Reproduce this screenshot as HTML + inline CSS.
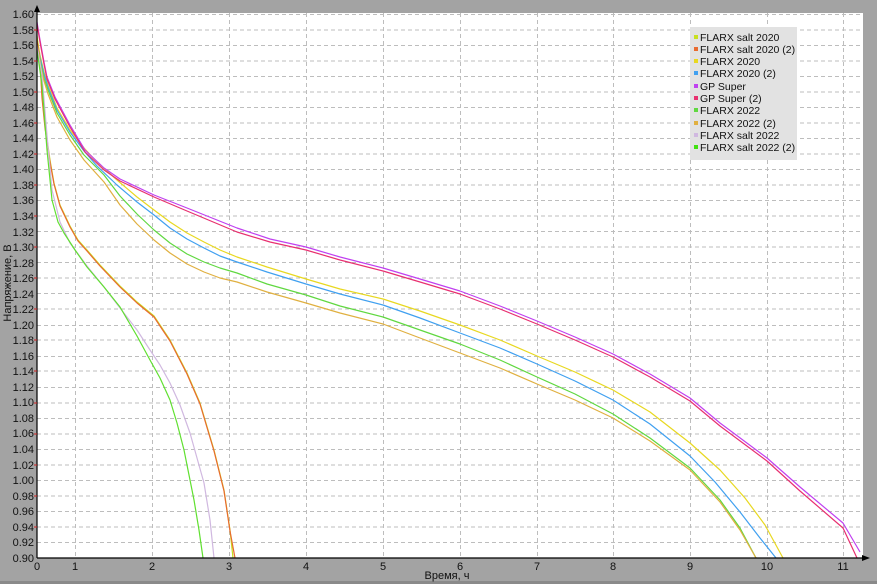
<!DOCTYPE html>
<html><head><meta charset="utf-8"><style>
html,body{margin:0;padding:0;background:#a3a3a3;}
svg{display:block;font-family:"Liberation Sans","DejaVu Sans",sans-serif;}
</style></head><body>
<svg width="877" height="584" viewBox="0 0 877 584" xmlns="http://www.w3.org/2000/svg">
<rect x="0" y="0" width="877" height="584" fill="#a3a3a3"/>
<rect x="0" y="581" width="877" height="3" fill="#8a8a8a"/>
<rect x="37" y="13" width="826" height="545" fill="#ffffff"/>
<g stroke="#bdbdbd" stroke-width="1" stroke-dasharray="4,3" fill="none">
<path d="M75.5 13V558M152.5 13V558M229.5 13V558M306.5 13V558M383.5 13V558M460.5 13V558M537.5 13V558M613.5 13V558M690.5 13V558M767.5 13V558M843.5 13V558"/>
<path d="M37 14.5H863M37 45.5H863M37 76.5H863M37 107.5H863M37 138.5H863M37 169.5H863M37 200.5H863M37 231.5H863M37 262.5H863M37 293.5H863M37 325.5H863M37 356.5H863M37 387.5H863M37 418.5H863M37 449.5H863M37 480.5H863M37 511.5H863M37 542.5H863"/>
<path d="M37 30H863M37 61H863M37 92H863M37 123H863M37 154H863M37 185H863M37 216H863M37 247H863M37 278H863M37 309H863M37 340H863M37 371H863M37 403H863M37 434H863M37 465H863M37 496H863M37 527H863"/>
</g>
<rect x="690" y="27" width="107" height="133" fill="#e2e2e2"/>
<g font-size="10.5" fill="#111">
<rect x="694" y="35" width="4" height="4" fill="#c8e020"/><text x="700" y="41">FLARX salt 2020</text>
<rect x="694" y="47" width="4" height="4" fill="#e86a30"/><text x="700" y="53">FLARX salt 2020 (2)</text>
<rect x="694" y="59" width="4" height="4" fill="#e8d820"/><text x="700" y="65">FLARX 2020</text>
<rect x="694" y="71" width="4" height="4" fill="#40a0f0"/><text x="700" y="77">FLARX 2020 (2)</text>
<rect x="694" y="84" width="4" height="4" fill="#c040f0"/><text x="700" y="90">GP Super</text>
<rect x="694" y="96" width="4" height="4" fill="#e83070"/><text x="700" y="102">GP Super (2)</text>
<rect x="694" y="108" width="4" height="4" fill="#60d840"/><text x="700" y="114">FLARX 2022</text>
<rect x="694" y="121" width="4" height="4" fill="#e0b040"/><text x="700" y="127">FLARX 2022 (2)</text>
<rect x="694" y="133" width="4" height="4" fill="#d0b8e0"/><text x="700" y="139">FLARX salt 2022</text>
<rect x="694" y="145" width="4" height="4" fill="#40e010"/><text x="700" y="151">FLARX salt 2022 (2)</text>
</g>
<g fill="none" stroke-width="1.2" stroke-linejoin="round">
<polyline stroke="#e8d820" points="37,38 40,55 44,72 48,85 57,108 70,130 84,148 97,162 117,180 137,197 154,210 170,222 187,233 204,242 220,250 237,257 267,267 306,279 340,289 383,299 420,311 460,325 500,340 537,356 575,372 613,390 650,412 690,443 720,470 745,498 765,525 783,558"/>
<polyline stroke="#40a0f0" points="37,40 40,57 44,74 48,87 57,110 70,132 84,151 97,166 117,185 137,202 154,215 170,228 187,239 204,248 220,256 237,262 267,272 306,284 340,294 383,305 420,318 460,333 500,348 537,364 575,381 613,400 650,424 690,456 715,482 740,512 760,538 776,558"/>
<polyline stroke="#c040f0" points="37,22 40,40 44,62 47,77 55,97 70,125 85,150 104,168 120,179 154,195 187,208 237,228 270,239 306,247 340,257 383,268 420,279 460,291 500,306 537,321 575,337 613,354 650,374 690,398 720,423 767,458 800,487 843,523 860,552"/>
<polyline stroke="#e83070" points="37,24 40,42 44,64 47,79 55,99 70,127 85,152 104,170 120,181 154,197 187,211 237,232 270,242 306,250 340,260 383,271 420,282 460,294 500,309 537,324 575,340 613,357 650,377 690,401 720,426 767,461 800,491 843,528 857,558"/>
<polyline stroke="#60d840" points="37,44 40,60 44,78 48,90 57,113 70,135 84,155 104,175 120,196 137,214 154,230 170,243 187,254 204,262 220,268 237,273 267,284 306,295 340,306 383,317 420,330 460,344 500,360 537,377 575,394 613,414 650,438 690,468 720,500 740,528 756,558"/>
<polyline stroke="#e0b040" points="37,46 40,63 44,81 48,94 57,117 70,140 84,160 104,182 120,205 137,224 154,240 170,253 187,264 204,272 220,278 237,282 267,292 306,303 340,313 383,324 420,338 460,353 500,368 537,384 575,400 613,418 650,441 690,470 720,502 740,530 756,558"/>
<polyline stroke="#c8e020" points="37,36 40,60 42,95 45,125 50,160 54,183 60,205 70,226 78,240 87,250 100,265 120,286 137,302 154,316 170,340 187,373 200,403 214,450 224,490 230,530 233,558"/>
<polyline stroke="#e86a30" points="37,40 40,62 42,98 45,128 50,162 54,184 60,206 70,227 78,241 87,251 100,266 120,287 137,303 154,317 170,341 187,374 200,404 214,451 224,491 230,531 235,558"/>
<polyline stroke="#d0b8e0" points="37,45 42,75 47,135 52,190 60,222 70,243 87,266 104,287 120,308 137,330 150,350 160,365 170,383 180,405 190,433 197,458 204,483 210,520 214,558"/>
<polyline stroke="#60e030" points="37,50 42,85 47,150 52,200 58,222 64,233 75,250 87,267 104,287 120,307 137,336 150,360 160,378 170,400 177,423 184,450 189,475 194,500 199,530 203,558"/>
</g>
<g stroke="#000" stroke-width="1.2" fill="none">
<path d="M37 558V10M37 558H866"/>
</g>
<path d="M34 12L37 5L40 12Z" fill="#000"/>
<path d="M862 555L870 558L862 561Z" fill="#000"/>
<g stroke="#d02020" stroke-width="1">
<path d="M34 30H37M34 61H37M34 92H37M34 123H37M34 154H37M34 185H37M34 216H37M34 247H37M34 278H37M34 309H37M34 340H37M34 371H37M34 403H37M34 434H37M34 465H37M34 496H37M34 527H37"/>
</g>
<g font-size="11" fill="#111" text-anchor="end">
<text x="34" y="18">1.60</text><text x="34" y="34">1.58</text><text x="34" y="49">1.56</text><text x="34" y="65">1.54</text><text x="34" y="80">1.52</text><text x="34" y="96">1.50</text><text x="34" y="111">1.48</text><text x="34" y="127">1.46</text><text x="34" y="142">1.44</text><text x="34" y="158">1.42</text><text x="34" y="173">1.40</text><text x="34" y="189">1.38</text><text x="34" y="204">1.36</text><text x="34" y="220">1.34</text><text x="34" y="236">1.32</text><text x="34" y="251">1.30</text><text x="34" y="267">1.28</text><text x="34" y="282">1.26</text><text x="34" y="298">1.24</text><text x="34" y="313">1.22</text><text x="34" y="329">1.20</text><text x="34" y="344">1.18</text><text x="34" y="360">1.16</text><text x="34" y="375">1.14</text><text x="34" y="391">1.12</text><text x="34" y="406">1.10</text><text x="34" y="422">1.08</text><text x="34" y="437">1.06</text><text x="34" y="453">1.04</text><text x="34" y="469">1.02</text><text x="34" y="484">1.00</text><text x="34" y="500">0.98</text><text x="34" y="515">0.96</text><text x="34" y="531">0.94</text><text x="34" y="546">0.92</text><text x="34" y="562">0.90</text>
</g>
<g font-size="11" fill="#111" text-anchor="middle">
<text x="37" y="570">0</text><text x="75" y="570">1</text><text x="152" y="570">2</text><text x="229" y="570">3</text><text x="306" y="570">4</text><text x="383" y="570">5</text><text x="460" y="570">6</text><text x="537" y="570">7</text><text x="613" y="570">8</text><text x="690" y="570">9</text><text x="767" y="570">10</text><text x="843" y="570">11</text>
<text x="447" y="579">Время, ч</text>
<text transform="translate(11,283) rotate(-90)">Напряжение, В</text>
</g>
</svg>
</body></html>
